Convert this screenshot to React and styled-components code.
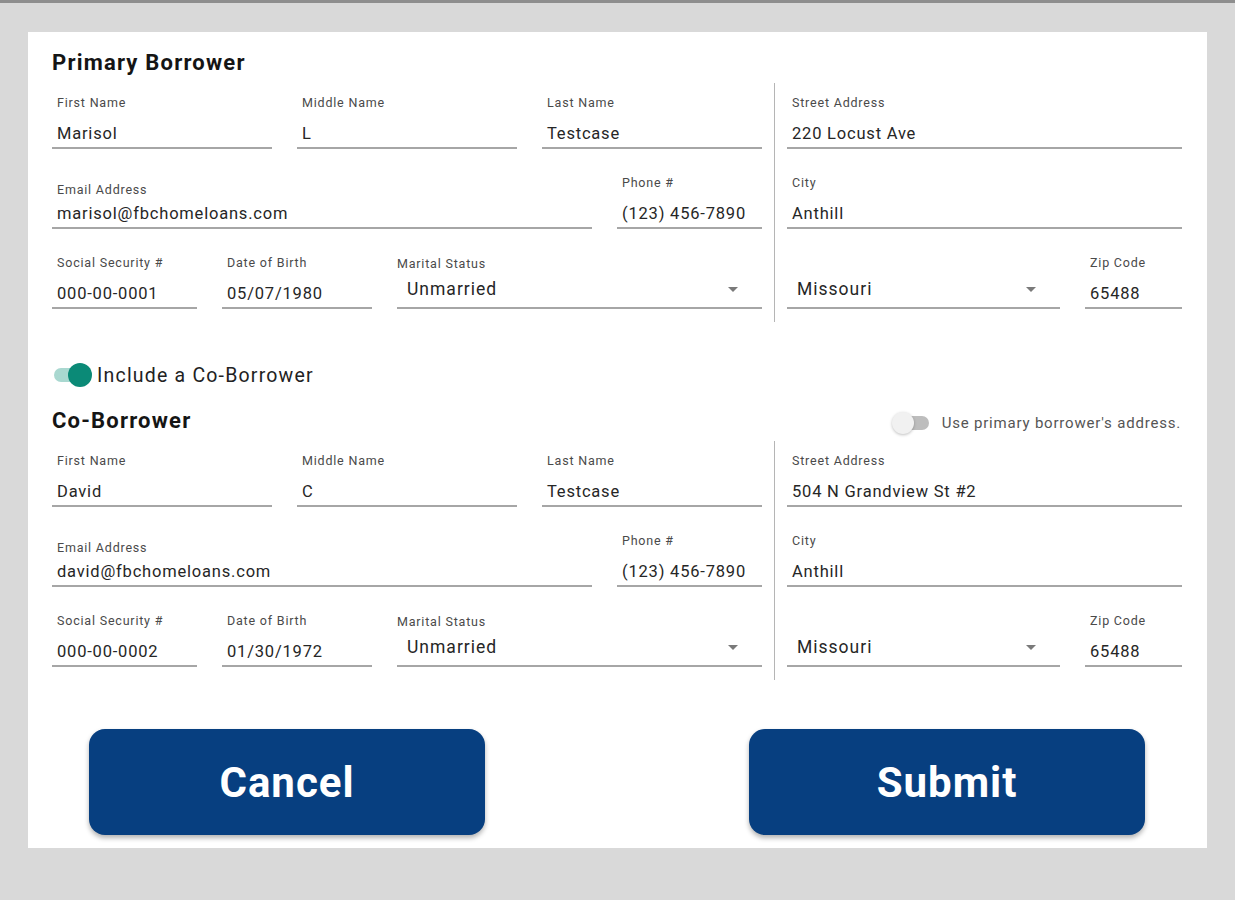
import React from "react";
import styled, { createGlobalStyle } from "styled-components";

const GlobalStyle = createGlobalStyle`
  html, body {
    margin: 0;
    padding: 0;
    background: #d9d9d9;
    font-family: Roboto, "Liberation Sans", sans-serif;
  }
  body {
    border-top: 3px solid #8e8e8e;
  }
`;

const Page = styled.div`
  padding: 29px 28px 52px 28px;
`;

const Card = styled.div`
  width: 1179px;
  height: 816px;
  box-sizing: border-box;
  background: #fff;
  padding: 18px 25px 12px 24px;
  display: flex;
  flex-direction: column;
`;

const Heading = styled.h2`
  margin: 0;
  font-size: 22px;
  line-height: 25px;
  font-weight: 700;
  letter-spacing: 1.2px;
  color: #151515;
`;

const HeadRow = styled.div`
  display: flex;
  justify-content: space-between;
  align-items: center;
  margin-top: 21px;
`;

const Grid = styled.div`
  display: grid;
  grid-template-columns: 710px 1px 395px;
  column-gap: 12px;
  margin-top: 8px;
`;

const Divider = styled.div`
  background: #b5b5b5;
  width: 1px;
`;

const Column = styled.div`
  display: flex;
  flex-direction: column;
  padding-bottom: 13px;
`;

const Row = styled.div`
  display: flex;
  align-items: flex-end;
  gap: 25px;
  height: ${(p) => (p.first ? 66 : 80)}px;
`;

const FieldBox = styled.div`
  display: flex;
  flex-direction: column;
  width: ${(p) => (p.w ? `${p.w}px` : "100%")};
  flex: ${(p) => (p.w ? "none" : "1")};
`;

const Label = styled.div`
  font-size: 12.5px;
  line-height: 14px;
  letter-spacing: 0.8px;
  color: #4a4a4a;
  padding: 0 5px;
  margin-bottom: ${(p) => (p.tight ? 6 : 13)}px;
  white-space: nowrap;
`;

const Value = styled.div`
  font-size: 16.5px;
  line-height: 20px;
  letter-spacing: 0.8px;
  color: #262626;
  padding: 1px 5px 3px 5px;
  border-bottom: 2px solid #a6a6a6;
  white-space: nowrap;
`;

const SelectBox = styled.div`
  display: flex;
  align-items: center;
  justify-content: space-between;
  font-size: 17.5px;
  line-height: 20px;
  letter-spacing: 1px;
  color: #262626;
  padding: 0 24px 8px 10px;
  border-bottom: 2px solid #a6a6a6;
`;

const SelectLabel = styled(Label)`
  padding: 0;
  margin-bottom: 8px;
`;

const Arrow = styled.span`
  width: 0;
  height: 0;
  border-left: 5px solid transparent;
  border-right: 5px solid transparent;
  border-top: 5px solid #7a7a7a;
`;

const ToggleRow = styled.label`
  display: flex;
  align-items: center;
  gap: 7px;
  margin-top: 41px;
  height: 24px;
  font-size: 19.5px;
  letter-spacing: 1.2px;
  color: #222;
`;

const Track = styled.span`
  position: relative;
  display: inline-block;
  width: 36px;
  height: 14px;
  border-radius: 7px;
  background: ${(p) => (p.on ? "#a9d8d0" : "#bdbdbd")};
  margin-left: ${(p) => (p.on ? 2 : 0)}px;
`;

const Thumb = styled.span`
  position: absolute;
  top: 50%;
  left: ${(p) => (p.on ? "14px" : "-1px")};
  width: ${(p) => (p.on ? 24 : 22)}px;
  height: ${(p) => (p.on ? 24 : 22)}px;
  margin-top: ${(p) => (p.on ? -12 : -11)}px;
  border-radius: 50%;
  background: ${(p) => (p.on ? "#0b8a77" : "#f1f1f1")};
  box-shadow: ${(p) => (p.on ? "none" : "0 1px 3px rgba(0,0,0,0.25)")};
`;

const SmallToggle = styled.label`
  display: flex;
  align-items: center;
  gap: 13px;
  font-size: 15px;
  letter-spacing: 0.8px;
  color: #555;
  margin-top: 5px;
  margin-right: 1px;
`;

const Buttons = styled.div`
  display: flex;
  justify-content: space-between;
  padding: 0 37px;
  margin-top: 49px;
`;

const Button = styled.button`
  width: 396px;
  height: 106px;
  border: none;
  border-radius: 16px;
  background: #073f80;
  color: #fff;
  font-family: Roboto, "Liberation Sans", sans-serif;
  font-size: 42px;
  font-weight: 700;
  letter-spacing: 1px;
  box-shadow: 0 3px 5px rgba(0, 0, 0, 0.3);
  cursor: pointer;
`;

function Field({ label, value, w, tight }) {
  return (
    <FieldBox w={w}>
      <Label tight={tight}>{label}</Label>
      <Value>{value}</Value>
    </FieldBox>
  );
}

function Select({ label, value, w }) {
  return (
    <FieldBox w={w}>
      {label && <SelectLabel>{label}</SelectLabel>}
      <SelectBox>
        <span>{value}</span>
        <Arrow />
      </SelectBox>
    </FieldBox>
  );
}

function Toggle({ on }) {
  return (
    <Track on={on}>
      <Thumb on={on} />
    </Track>
  );
}

function BorrowerGrid({ p }) {
  return (
    <Grid>
      <Column>
        <Row first>
          <Field w={220} label="First Name" value={p.first} />
          <Field w={220} label="Middle Name" value={p.middle} />
          <Field w={220} label="Last Name" value={p.last} />
        </Row>
        <Row>
          <Field w={540} tight label="Email Address" value={p.email} />
          <Field w={145} label="Phone #" value="(123) 456-7890" />
        </Row>
        <Row>
          <Field w={145} label="Social Security #" value={p.ssn} />
          <Field w={150} label="Date of Birth" value={p.dob} />
          <Select w={365} label="Marital Status" value="Unmarried" />
        </Row>
      </Column>
      <Divider />
      <Column>
        <Row first>
          <Field label="Street Address" value={p.street} />
        </Row>
        <Row>
          <Field label="City" value="Anthill" />
        </Row>
        <Row>
          <Select w={273} value="Missouri" />
          <Field w={97} label="Zip Code" value="65488" />
        </Row>
      </Column>
    </Grid>
  );
}

const primary = {
  first: "Marisol",
  middle: "L",
  last: "Testcase",
  email: "marisol@fbchomeloans.com",
  ssn: "000-00-0001",
  dob: "05/07/1980",
  street: "220 Locust Ave",
};

const co = {
  first: "David",
  middle: "C",
  last: "Testcase",
  email: "david@fbchomeloans.com",
  ssn: "000-00-0002",
  dob: "01/30/1972",
  street: "504 N Grandview St #2",
};

export default function App() {
  return (
    <>
      <GlobalStyle />
      <Page>
        <Card>
          <Heading>Primary Borrower</Heading>
          <BorrowerGrid p={primary} />
          <ToggleRow>
            <Toggle on />
            Include a Co-Borrower
          </ToggleRow>
          <HeadRow>
            <Heading>Co-Borrower</Heading>
            <SmallToggle>
              <Toggle />
              Use primary borrower's address.
            </SmallToggle>
          </HeadRow>
          <BorrowerGrid p={co} />
          <Buttons>
            <Button>Cancel</Button>
            <Button>Submit</Button>
          </Buttons>
        </Card>
      </Page>
    </>
  );
}
